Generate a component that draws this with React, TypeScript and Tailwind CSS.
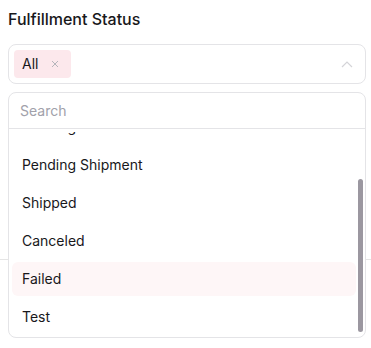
import React, { useEffect, useRef } from "react";

const items = ["All", "Pending", "Pending Shipment", "Shipped", "Canceled", "Failed", "Test"];

export default function App() {
  const listRef = useRef<HTMLDivElement>(null);
  useEffect(() => {
    if (listRef.current) listRef.current.scrollTop = listRef.current.scrollHeight;
  }, []);
  return (
    <div className="relative w-[371px] h-[348px] bg-white font-['Inter',sans-serif] text-[#18181b]">
      <div className="px-2 pt-[7px]">
        <div className="text-base leading-6 font-medium">Fulfillment Status</div>
        <div className="mt-[13px] w-[358px] h-[40px] rounded-lg border border-[#e4e4e7] flex items-center pl-[5px] pr-[12px]">
          <div className="h-[28px] rounded-[4px] bg-[#fce8ec] flex items-center pl-[8px] pr-[12px] gap-[13px]">
            <span className="text-sm">All</span>
            <svg width="8" height="8" viewBox="0 0 8 8" className="text-[#b5b5bb]">
              <path d="M1 1L7 7M7 1L1 7" stroke="currentColor" strokeWidth="1" />
            </svg>
          </div>
          <div className="flex-1" />
          <svg width="12" height="7" viewBox="0 0 12 7" className="text-[#d4d4d8]">
            <path d="M1 6L6 1L11 6" stroke="currentColor" strokeWidth="1.2" fill="none" />
          </svg>
        </div>
        <div className="h-[176px] border-b border-[#e5e5e5] -mx-2" />
      </div>

      <div className="absolute left-2 top-[92px] w-[358px] h-[246px] rounded-lg border border-[#e4e4e7] bg-white flex flex-col overflow-hidden">
        <div className="h-[36px] shrink-0 border-b border-[#e4e4e7] flex items-center pl-[11px] text-sm text-[#a1a1aa]">
          Search
        </div>
        <div className="relative flex-1 min-h-0">
          <div ref={listRef} className="mt-[3px] h-[205px] overflow-hidden">
            <div className="px-[3px] pb-[3px] flex flex-col gap-1">
              {items.map((it) => (
                <div
                  key={it}
                  className={`h-[34px] shrink-0 flex items-center pl-[10px] text-sm rounded-md mr-[6px] ${it === "Failed" ? "bg-[#fef6f7]" : ""}`}
                >
                  {it}
                </div>
              ))}
            </div>
          </div>
          <div className="absolute right-[2px] top-[50px] w-[5px] h-[153px] rounded-full bg-[#9b97a0]" />
        </div>
      </div>
    </div>
  );
}
